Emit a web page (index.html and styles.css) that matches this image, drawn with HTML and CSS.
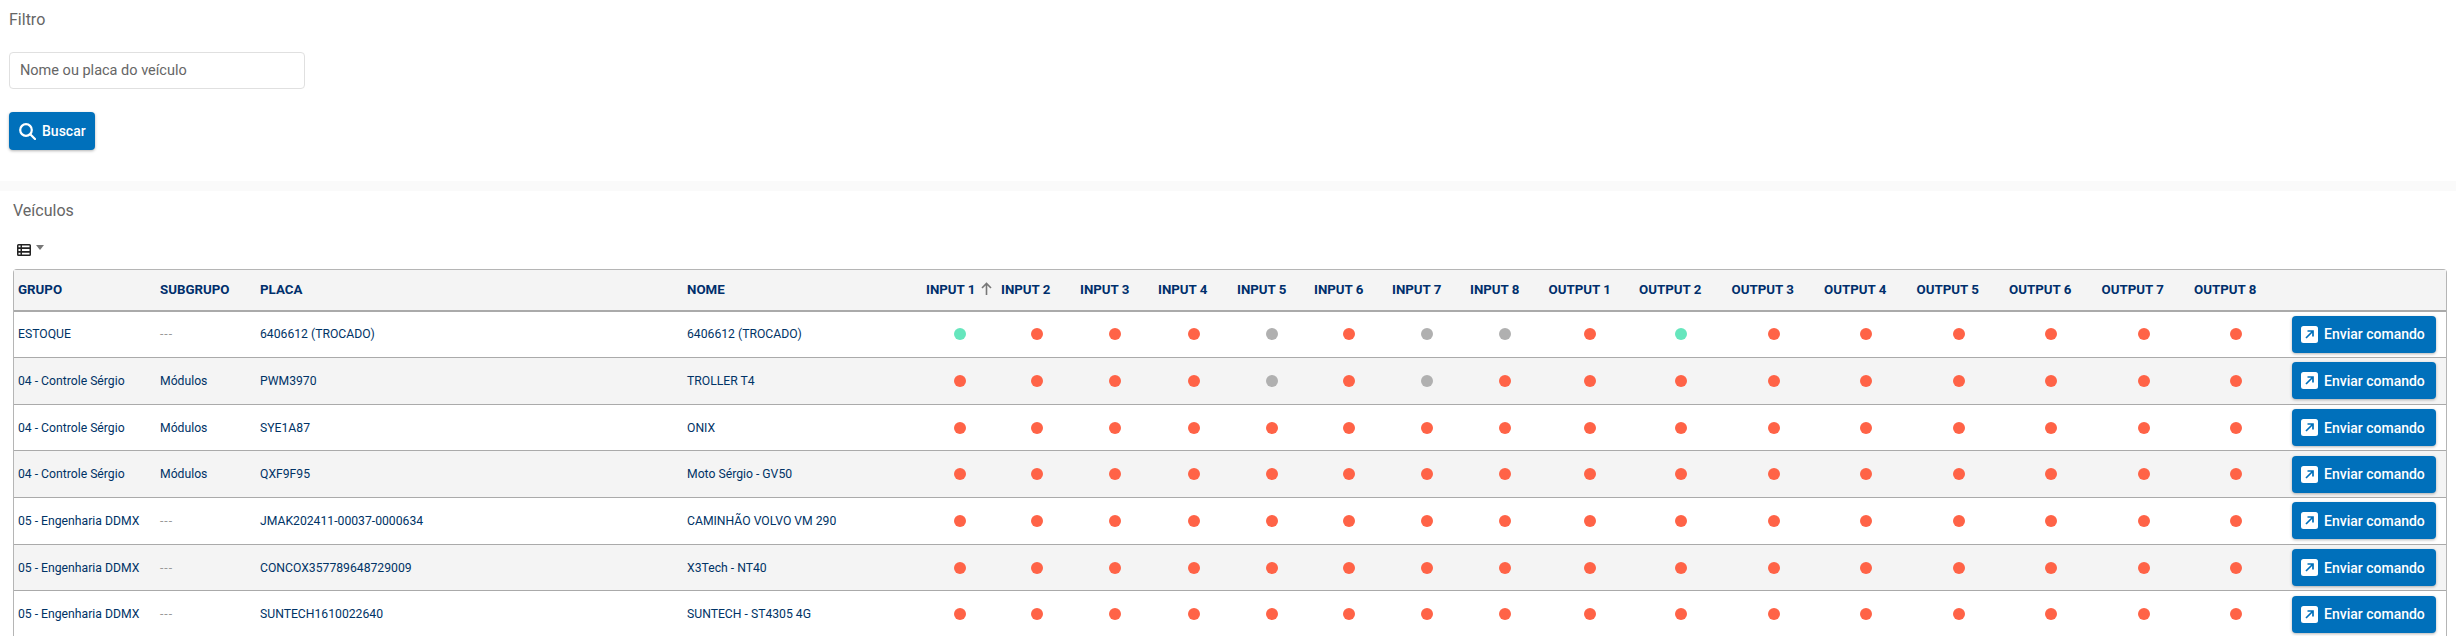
FILE: index.html
```html
<!DOCTYPE html>
<html>
<head>
  <title>Veículos</title>
  <link rel="stylesheet" href="styles.css">
</head>
<body>
  <section class="filter">
    <h2>Filtro</h2>
    <input class="search-input" type="text" placeholder="Nome ou placa do veículo">
    <button class="btn btn-search">
      <svg width="17" height="17" viewBox="0 0 17 17" fill="none" stroke="#fff" stroke-width="2.200" stroke-linecap="round"><circle cx="7" cy="7" r="5.800"/><path d="M11.500 11.500l4.500 4.500"/></svg>
      Buscar
    </button>
  </section>

  <section class="vehicles">
    <h2>Veículos</h2>
    <div class="columns-toggle">
      <svg width="14" height="12" viewBox="0 0 14 12"><path fill="#222" fill-rule="evenodd" d="M1.500 0h11A1.500 1.500 0 0 1 14 1.500v9a1.500 1.500 0 0 1-1.500 1.500h-11A1.500 1.500 0 0 1 0 10.500v-9A1.500 1.500 0 0 1 1.500 0zM1.500 1.500V3.300H3.500V1.500zM5 1.500V3.300H12.500V1.500zM1.500 5.100V6.900H3.500V5.100zM5 5.100V6.900H12.500V5.100zM1.500 8.700V10.500H3.500V8.700zM5 8.700V10.500H12.500V8.700z"/></svg>
      <span class="caret"></span>
    </div>
    <div class="table-wrap">
      <table>
        <colgroup>
          <col class="c-grupo"><col class="c-sub"><col class="c-placa"><col class="c-nome">
          <col class="c-i1"><col class="c-i2"><col class="c-i3"><col class="c-i4"><col class="c-i5"><col class="c-i6"><col class="c-i7"><col class="c-i8">
          <col class="c-o1"><col class="c-o"><col class="c-o"><col class="c-o"><col class="c-o"><col class="c-o"><col class="c-o"><col class="c-o">
          <col>
        </colgroup>
        <thead>
          <tr>
            <th>GRUPO</th><th>SUBGRUPO</th><th>PLACA</th><th>NOME</th>
            <th>INPUT 1<svg class="sort" width="11" height="13" viewBox="0 0 11 13" fill="none" stroke="#777" stroke-width="1.600"><path d="M5.500 13V1.500M1 6l4.500-4.500L10 6"/></svg></th>
            <th>INPUT 2</th><th>INPUT 3</th><th>INPUT 4</th><th>INPUT 5</th><th>INPUT 6</th><th>INPUT 7</th><th>INPUT 8</th>
            <th>OUTPUT 1</th><th>OUTPUT 2</th><th>OUTPUT 3</th><th>OUTPUT 4</th><th>OUTPUT 5</th><th>OUTPUT 6</th><th>OUTPUT 7</th><th>OUTPUT 8</th>
            <th></th>
          </tr>
        </thead>
        <tbody id="rows"></tbody>
      </table>
    </div>
  </section>

  <script>
    // g = on, r = off, x = sem sinal (8 inputs + 8 outputs)
    var rows = [
      ['ESTOQUE', '---', '6406612 (TROCADO)', '6406612 (TROCADO)', 'grrrxrxx' + 'rgrrrrrr'],
      ['04 - Controle Sérgio', 'Módulos', 'PWM3970', 'TROLLER T4', 'rrrrxrxr' + 'rrrrrrrr'],
      ['04 - Controle Sérgio', 'Módulos', 'SYE1A87', 'ONIX', 'rrrrrrrr' + 'rrrrrrrr'],
      ['04 - Controle Sérgio', 'Módulos', 'QXF9F95', 'Moto Sérgio - GV50', 'rrrrrrrr' + 'rrrrrrrr'],
      ['05 - Engenharia DDMX', '---', 'JMAK202411-00037-0000634', 'CAMINHÃO VOLVO VM 290', 'rrrrrrrr' + 'rrrrrrrr'],
      ['05 - Engenharia DDMX', '---', 'CONCOX357789648729009', 'X3Tech - NT40', 'rrrrrrrr' + 'rrrrrrrr'],
      ['05 - Engenharia DDMX', '---', 'SUNTECH1610022640', 'SUNTECH - ST4305 4G', 'rrrrrrrr' + 'rrrrrrrr']
    ];
    var icon = '<svg width="17" height="17" viewBox="0 0 17 17"><rect width="17" height="17" rx="2.500" fill="#fff"/><path d="M5 12l6.500-6.500M6.500 5h5.500v5.500" fill="none" stroke="#0070bb" stroke-width="1.700"/></svg>';
    var html = '';
    rows.forEach(function (r) {
      html += '<tr>';
      for (var i = 0; i < 4; i++) {
        html += '<td' + (r[i] === '---' ? ' class="empty"' : '') + '>' + r[i] + '</td>';
      }
      r[4].split('').forEach(function (s) {
        html += '<td class="status"><span class="dot dot-' + s + '"></span></td>';
      });
      html += '<td class="action"><button class="btn btn-send">' + icon + 'Enviar comando</button></td></tr>';
    });
    document.getElementById('rows').innerHTML = html;
  </script>
</body>
</html>
```

FILE: styles.css
```css
html, body {
  height: 100%;
  overflow: hidden;
}
body {
  margin: 0;
  background: #fff;
  font-family: Roboto, "Noto Sans", sans-serif;
  color: #003366;
}
h2 {
  margin: 0;
  font-size: 16px;
  font-weight: 400;
  line-height: 20px;
  color: #666;
}
.filter {
  display: flex;
  flex-direction: column;
  align-items: flex-start;
  height: 181px;
  box-sizing: border-box;
  padding: 10px 9px 0;
}
.search-input {
  width: 296px;
  height: 37px;
  box-sizing: border-box;
  margin-top: 22px;
  padding: 0 10px;
  border: 1px solid #e0e0e0;
  border-radius: 4px;
  font-family: inherit;
  font-size: 14.500px;
}
.search-input::placeholder {
  color: #666;
  opacity: 1;
}
.btn {
  display: flex;
  align-items: center;
  border: none;
  border-radius: 4px;
  background-color: #0070bb;
  color: #fff;
  font-family: inherit;
  box-shadow: 0 1px 3px rgba(0, 0, 0, .3);
}
.btn-search {
  width: 86px;
  height: 38px;
  gap: 6px;
  margin-top: 23px;
  padding: 0 0 0 10px;
  font-size: 14px;
  font-weight: 500;
}
.vehicles {
  border-top: 10px solid #fafafa;
  padding: 0 9px 0 13px;
}
.vehicles h2 {
  padding-top: 10px;
}
.columns-toggle {
  display: flex;
  gap: 5px;
  height: 48px;
  padding: 23px 0 0 4px;
  box-sizing: border-box;
}
.caret {
  width: 0;
  height: 0;
  margin-top: 1px;
  border-left: 4.500px solid transparent;
  border-right: 4.500px solid transparent;
  border-top: 5px solid #777;
}
.table-wrap {
  border: 1px solid #b5b5b5;
  border-bottom: 0;
  border-radius: 4px 4px 0 0;
}
table {
  width: 100%;
  table-layout: fixed;
  border-collapse: separate;
  border-spacing: 0;
  font-size: 12.200px;
}
.c-grupo { width: 142px; }
.c-sub { width: 100px; }
.c-placa { width: 427px; }
.c-nome { width: 239px; }
.c-i1 { width: 75px; }
.c-i2 { width: 79px; }
.c-i3 { width: 78px; }
.c-i4 { width: 79px; }
.c-i5 { width: 77px; }
.c-i6 { width: 78px; }
.c-i7 { width: 78px; }
.c-i8 { width: 78.500px; }
.c-o1 { width: 90.500px; }
.c-o { width: 92.500px; }
th {
  height: 41.500px;
  padding: 0 4px;
  box-sizing: border-box;
  background: #f4f4f4;
  border-bottom: 2px solid #aaa;
  text-align: left;
  font-weight: 700;
  font-size: 13.300px;
  color: #002f6c;
  white-space: nowrap;
}
.sort {
  margin-left: 6px;
  vertical-align: -1px;
}
td {
  height: 46.670px;
  padding: 0 4px;
  box-sizing: border-box;
  border-bottom: 1px solid #aaa;
  white-space: nowrap;
}
tbody tr:nth-child(even) td {
  background: #f4f4f4;
}
.empty {
  color: #999;
  letter-spacing: 1px;
}
.status {
  text-align: center;
  line-height: 0;
}
.dot {
  display: inline-block;
  width: 12px;
  height: 12px;
  border-radius: 50%;
}
.dot-r { background: #ff6347; }
.dot-g { background: #66e6bd; }
.dot-x { background: #b0b0b0; }
.action {
  padding: 0 0 0 9.500px;
}
.btn-send {
  width: 144px;
  height: 37px;
  gap: 6px;
  padding: 0 0 0 9px;
  font-size: 14px;
  font-weight: 500;
}
```
